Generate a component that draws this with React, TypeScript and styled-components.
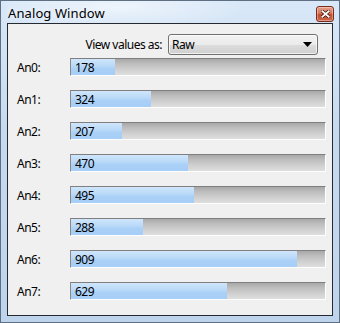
import React from "react";
import styled, { createGlobalStyle } from "styled-components";

const Global = createGlobalStyle`
  html, body { margin: 0; padding: 0; background: #ffffff; }
  body { font-family: "Noto Sans", "Liberation Sans", sans-serif; }
`;

const Window = styled.div`
  box-sizing: border-box;
  width: 340px;
  height: 323px;
  border: 1px solid #5f6f82;
  background: linear-gradient(180deg, #d9e8f8 0%, #c6daef 40%, #bed4ec 100%);
  padding: 0 6px 6px 6px;
  display: flex;
  flex-direction: column;
`;

const TitleBar = styled.div`
  height: 22px;
  display: flex;
  align-items: center;
  justify-content: space-between;
  background: radial-gradient(ellipse 130px 22px at 110px 6px, rgba(255,255,255,0.55), rgba(255,255,255,0) 100%);
`;

const Title = styled.span`
  font-size: 13px;
  letter-spacing: 0.1px;
  color: #000000;
  padding-left: 1px;
  margin-top: 1px;
  text-shadow: 0 0 6px rgba(255,255,255,0.9);
`;

const CloseButton = styled.div`
  box-sizing: border-box;
  width: 18px;
  height: 16px;
  margin-top: 4px;
  margin-right: -1px;
  border: 1px solid #7d2a19;
  border-radius: 3px;
  background: linear-gradient(180deg, #e6a08c 0%, #d57659 45%, #c24a2c 55%, #cf6a4b 100%);
  display: flex;
  align-items: center;
  justify-content: center;
  box-shadow: inset 0 0 0 1px rgba(255,255,255,0.35);
`;

const Client = styled.div`
  flex: 1;
  box-sizing: border-box;
  border: 1px solid #262a30;
  background: #f0f0f0;
  padding: 10px 0 0 0;
  display: flex;
  flex-direction: column;
  font-size: 12px;
  letter-spacing: -0.5px;
  color: #000;
`;

const ViewRow = styled.div`
  display: flex;
  justify-content: flex-end;
  align-items: center;
  gap: 6px;
  padding-right: 14px;
  height: 21px;
  margin-bottom: 3px;
`;

const ViewLabel = styled.span`
  font-size: 12px;
`;

const Combo = styled.div`
  box-sizing: border-box;
  width: 150px;
  height: 21px;
  border: 1px solid #707070;
  border-radius: 3px;
  background: linear-gradient(180deg, #f2f2f2 0%, #ebebeb 50%, #dddddd 51%, #cfcfcf 100%);
  box-shadow: inset 0 0 0 1px rgba(255,255,255,0.7);
  display: flex;
  align-items: center;
  justify-content: space-between;
  padding: 0 5px 0 3px;
`;

const Rows = styled.div`
  display: flex;
  flex-direction: column;
  gap: 14px;
`;

const Row = styled.div`
  display: grid;
  grid-template-columns: 62px 256px;
  align-items: center;
  height: 18px;
`;

const RowLabel = styled.span`
  padding-left: 9px;
  font-size: 12px;
`;

const Bar = styled.div`
  position: relative;
  box-sizing: border-box;
  height: 18px;
  border-top: 1px solid #7f7f7f;
  border-left: 1px solid #8a8a8a;
  border-right: 1px solid #ffffff;
  border-bottom: 1px solid #ffffff;
  background: linear-gradient(180deg, #a8a8a8 0%, #bdbdbd 30%, #d2d2d2 70%, #dedede 100%);
  display: flex;
`;

const Fill = styled.div`
  height: 100%;
  background: linear-gradient(180deg, #cfe5fb 0%, #bcdaf9 40%, #aad0f7 60%, #a6cdf6 100%);
`;

const BarText = styled.span`
  position: absolute;
  left: 4px;
  top: 0;
  bottom: 0;
  display: flex;
  align-items: center;
  font-size: 12px;
`;

const values = [178, 324, 207, 470, 495, 288, 909, 629];

export default function App() {
  return (
    <>
      <Global />
      <Window>
        <TitleBar>
          <Title>Analog Window</Title>
          <CloseButton>
            <svg width="9" height="8" viewBox="0 0 9 8">
              <path d="M1 1 L8 7 M8 1 L1 7" stroke="#3a1008" strokeWidth="3.2" strokeLinecap="square" />
              <path d="M1.2 1.2 L7.8 6.8 M7.8 1.2 L1.2 6.8" stroke="#ffffff" strokeWidth="1.8" strokeLinecap="square" />
            </svg>
          </CloseButton>
        </TitleBar>
        <Client>
          <ViewRow>
            <ViewLabel>View values as:</ViewLabel>
            <Combo>
              <span>Raw</span>
              <svg width="9" height="5" viewBox="0 0 9 5">
                <path d="M0 0 H9 L4.5 5 Z" fill="#000" />
              </svg>
            </Combo>
          </ViewRow>
          <Rows>
            {values.map((v, i) => (
              <Row key={i}>
                <RowLabel>An{i}:</RowLabel>
                <Bar>
                  <Fill style={{ width: `${(v / 1023) * 254}px` }} />
                  <BarText>{v}</BarText>
                </Bar>
              </Row>
            ))}
          </Rows>
        </Client>
      </Window>
    </>
  );
}
